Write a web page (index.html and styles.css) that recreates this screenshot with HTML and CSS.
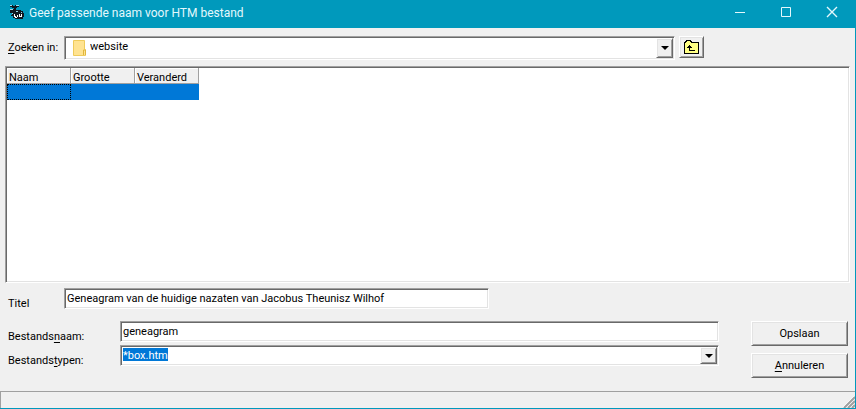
FILE: index.html
```
<!DOCTYPE html>
<html lang="nl">

<head>
    <meta charset="utf-8">
    <meta name="viewport" content="width=device-width, initial-scale=1.0">
    <title>Geef passende naam voor HTM bestand</title>
    <link rel="stylesheet" href="styles.css">
</head>

<body>
    <header class="titelbalk">
        <svg class="logo" width="16" height="16" viewBox="0 0 16 16" shape-rendering="crispEdges" aria-hidden="true">
            <path fill="#101820" d="M2 1h3v1h2v-1h4v2h-2v1h-1v2h-2v-2h-2v-1h-2zM2 5h4v1h7v1h2v2h1v4h-1v2h-8v-1h-2v-2h-2v-1h1v-2h-2z" />
            <path fill="#9fd8e8" d="M2 1h2v1h-2zM8 1h3v1h-3zM2 5h3v1h-3zM4 9h1v1h-1zM8 7h2v1h-2zM13 8h1v1h-1z" />
            <path fill="#fff" d="M6 10h1v2h1v1h1v-2h1v2h-1v1h-2v-1h-1zM11 10h1v2h-1zM13 10h1v3h-3v-1h2z" />
        </svg>
        <h1>Geef passende naam voor HTM bestand</h1>
        <div class="vensterknoppen">
            <button type="button" aria-label="Minimaliseren">
                <svg width="12" height="12" viewBox="0 0 12 12"><path d="M1 6.5h10" /></svg>
            </button>
            <button type="button" aria-label="Maximaliseren">
                <svg width="12" height="12" viewBox="0 0 12 12"><path d="M1.5 1.5h9v9h-9z" /></svg>
            </button>
            <button type="button" aria-label="Sluiten">
                <svg width="12" height="12" viewBox="0 0 12 12"><path stroke-width="1.4" d="M1 1l10 10M11 1l-10 10" /></svg>
            </button>
        </div>
    </header>

    <form class="venster">
        <div class="zoeken">
            <label for="map"><u>Z</u>oeken in:</label>
            <div class="keuze">
                <svg class="map_icoon" width="14" height="16" viewBox="0 0 14 16" aria-hidden="true">
                    <path fill="#ffe391" stroke="#efcb5b" d="M.5.5h11v9h1v6h-12z" />
                    <path fill="none" stroke="#e0b63c" d="M10.500 15v-5h2v5" />
                </svg>
                <select id="map" class="map">
                    <option>website</option>
                </select>
                <span class="pijl"></span>
            </div>
            <button type="button" class="omhoog" aria-label="Map omhoog">
                <svg width="16" height="14" viewBox="0 0 16 14" shape-rendering="crispEdges">
                    <path fill="#ffff84" stroke="#000" d="M.5 13.500v-11h1l1-2h4l1 2h7v11z" />
                    <path fill="none" stroke="#000" d="M5.500 5v5.500h5" />
                    <path d="M5 5h1v1h1v1h1v1h-5v-1h1v-1h1z" />
                </svg>
            </button>
        </div>

        <div class="lijst">
            <table>
                <thead>
                    <tr>
                        <th>Naam</th>
                        <th>Grootte</th>
                        <th>Veranderd</th>
                    </tr>
                </thead>
                <tbody>
                    <tr class="gekozen">
                        <td></td>
                        <td></td>
                        <td></td>
                    </tr>
                </tbody>
            </table>
        </div>

        <div class="titel">
            <label for="titel">Titel</label>
            <input type="text" id="titel" value="Geneagram van de huidige nazaten van Jacobus Theunisz Wilhof">
        </div>

        <div class="onder">
            <div class="velden">
                <label for="naam">Bestands<u>n</u>aam:</label>
                <input type="text" id="naam" value="geneagram">
                <label for="type">Bestands<u>t</u>ypen:</label>
                <div class="keuze">
                    <select id="type" class="type">
                        <option>*box.htm</option>
                    </select>
                    <span class="pijl"></span>
                </div>
            </div>
            <div class="knoppen">
                <button type="submit">Opslaan</button>
                <button type="button"><u>A</u>nnuleren</button>
            </div>
        </div>
    </form>

    <footer>
        <svg width="12" height="12" viewBox="0 0 12 12" aria-hidden="true">
            <path stroke="#fff" d="M0 11l11-11M4 11l7-7M8 11l3-3" />
            <path stroke="#a0a0a0" stroke-width="2" d="M1 12l11-11M5 12l7-7M9 12l3-3" />
        </svg>
    </footer>
</body>

</html>
```
FILE: styles.css
```
* {
    box-sizing: border-box;
}

body {
    display: flex;
    flex-direction: column;
    min-height: 100vh;
    margin: 0;
    background-color: #f0f0f0;
    border: solid #0099bc;
    border-width: 0 1px 1px 0;
    font-family: Roboto, "Liberation Sans", Arial, sans-serif;
    font-size: 11px;
    line-height: 13px;
    color: #000;
}

button,
input,
select {
    font: inherit;
    color: inherit;
    border-radius: 0;
}

u {
    text-underline-offset: 2px;
}

.titelbalk {
    display: flex;
    align-items: center;
    height: 28px;
    padding-left: 8px;
    background-color: #0099bc;
    color: #e4f8fc;
}

.logo {
    margin: 0 5px 4px 0;
}

h1 {
    flex: 1;
    margin: 0;
    padding-bottom: 2px;
    font-size: 12px;
    font-weight: normal;
    line-height: 16px;
}

.vensterknoppen {
    display: flex;
    align-self: stretch;
}

.vensterknoppen button {
    display: flex;
    align-items: center;
    justify-content: center;
    width: 46px;
    padding: 0 0 4px;
    border: none;
    background: none;
}

.vensterknoppen path {
    fill: none;
    stroke: #e4f8fc;
}

.venster {
    display: flex;
    flex: 1;
    flex-direction: column;
    padding: 8px 5px 13px;
}

.zoeken {
    display: flex;
    gap: 4px;
    padding-right: 146px;
    margin-bottom: 6px;
}

.zoeken label {
    width: 55px;
    padding: 5px 0 0 3px;
}

input,
.keuze,
.lijst {
    border: 1px solid;
    border-color: #a0a0a0 #fff #fff #a0a0a0;
    background-color: #fff;
    box-shadow: inset 1px 1px #696969, inset -1px -1px #e3e3e3;
}

/* dropdown */
.keuze {
    position: relative;
    display: flex;
    flex: 1;
}

.keuze select {
    flex: 1;
    padding: 0 20px 0 2px;
    border: none;
    background-color: transparent;
    appearance: none;
}

.zoeken .keuze {
    height: 24px;
}

.keuze .map {
    padding: 0 20px 3px 25px;
}

.map_icoon {
    position: absolute;
    top: 3px;
    left: 8px;
}

.keuze .type {
    color: #fff;
    background: linear-gradient(#0078d7, #0078d7) 2px 2px / 45px 13px no-repeat;
}

.pijl {
    position: absolute;
    top: 1px;
    right: 1px;
    bottom: 1px;
    display: flex;
    align-items: center;
    justify-content: center;
    width: 17px;
    pointer-events: none;
}

.pijl::after {
    content: "";
    border: 4px solid transparent;
    border-top-color: #000;
    border-bottom: none;
}

/* raised edges */
.pijl,
.omhoog,
.knoppen button {
    border: 1px solid;
    border-color: #fff #696969 #696969 #fff;
    background-color: #f0f0f0;
    box-shadow: inset 1px 1px #e3e3e3, inset -1px -1px #a0a0a0;
}

.omhoog {
    display: flex;
    align-items: center;
    justify-content: center;
    width: 25px;
    height: 22px;
    padding: 0;
}

.lijst {
    flex: 1;
    padding: 1px;
}

table {
    border-spacing: 0;
    table-layout: fixed;
    width: 192px;
}

th {
    height: 16px;
    padding: 2px 1px 0 2px;
    background-color: #f0f0f0;
    box-shadow: inset -1px -1px #a0a0a0, inset 1px 1px #fff;
    font-weight: normal;
    text-align: left;
}

td {
    height: 16px;
    padding: 0;
}

.gekozen {
    background-color: #0078d7;
}

.gekozen td:first-child {
    outline: 1px dotted #000;
    outline-offset: -1px;
}

input {
    height: 21px;
    padding: 0 2px 1px;
}

.titel {
    display: flex;
    margin: 5px 0 11px;
}

.titel label {
    width: 59px;
    padding: 9px 0 0 3px;
}

.titel input {
    width: 425px;
}

.onder {
    display: flex;
    gap: 32px;
    padding-right: 2px;
}

.velden {
    display: grid;
    flex: 1;
    grid-template-columns: 115px 1fr;
    grid-auto-rows: 21px;
    row-gap: 3px;
}

.velden label {
    padding: 9px 0 0 3px;
}

.knoppen {
    display: flex;
    flex-direction: column;
    gap: 7px;
    width: 97px;
}

.knoppen button {
    height: 25px;
    padding: 0;
}

footer {
    display: flex;
    align-items: flex-end;
    justify-content: flex-end;
    height: 17px;
    border: solid #a0a0a0;
    border-width: 1px 0 0 1px;
}
```
